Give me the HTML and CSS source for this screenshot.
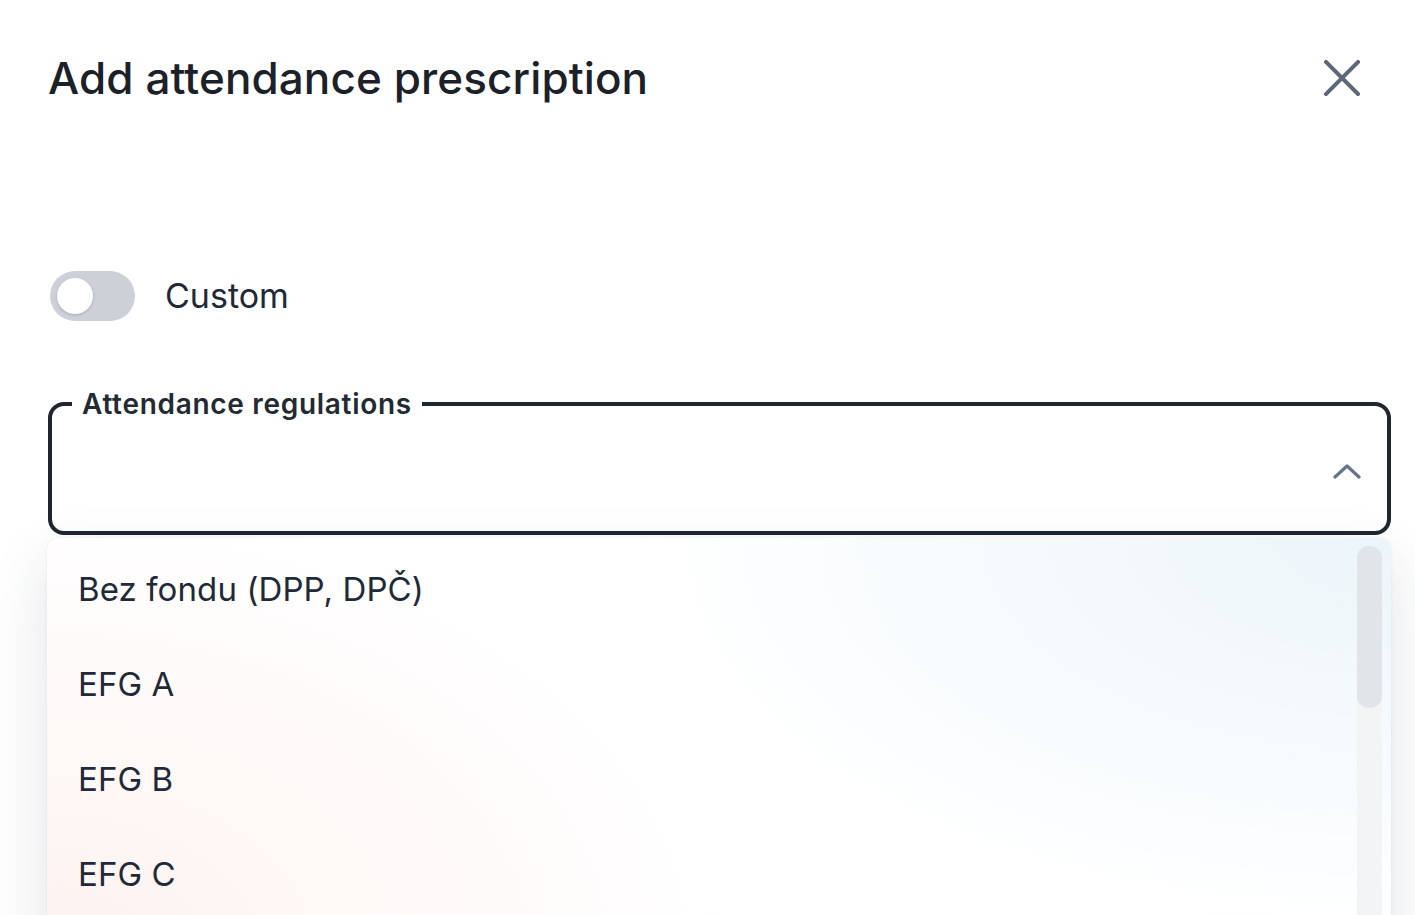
FILE: index.html
```html
<!DOCTYPE html>
<html lang="en">
<head>
<meta charset="utf-8">
<title>Add attendance prescription</title>
<link rel="stylesheet" href="styles.css">
</head>
<body>
<div class="dialog">
  <header class="head">
    <h1 class="title">Add attendance prescription</h1>
    <button class="close" aria-label="Close">
      <svg width="36" height="36" viewBox="0 0 36 36"><path d="M2 2 L34 34 M34 2 L2 34" stroke="#5d6978" stroke-width="4" stroke-linecap="square" fill="none"/></svg>
    </button>
  </header>

  <div class="toggle-row">
    <span class="switch"><span class="knob"></span></span>
    <span class="toggle-label">Custom</span>
  </div>

  <fieldset class="field">
    <legend class="field-label">Attendance regulations</legend>
    <div class="field-body">
      <svg class="chevron" width="28" height="16" viewBox="0 0 28 16"><path d="M2 14 L14 3 L26 14" stroke="#64748b" stroke-width="3.2" stroke-linecap="round" stroke-linejoin="round" fill="none"/></svg>
    </div>
  </fieldset>

  <div class="menu">
    <ul class="options">
      <li class="option">Bez fondu (DPP, DPČ)</li>
      <li class="option">EFG A</li>
      <li class="option">EFG B</li>
      <li class="option">EFG C</li>
    </ul>
    <div class="scrollbar"><div class="thumb"></div></div>
  </div>
</div>
</body>
</html>
```

FILE: styles.css
```css
* { box-sizing: border-box; }
html, body { margin: 0; padding: 0; background: #ffffff; overflow: hidden; }
body { height: 915px; }

.dialog {
  padding: 52px 24px 0 48px;
  font-family: Inter, "Liberation Sans", sans-serif;
  color: #1e232b;
}

.head {
  display: flex;
  align-items: center;
  justify-content: space-between;
}
.title {
  margin: 0;
  font-size: 44px;
  line-height: 1.2;
  font-weight: 500;
  letter-spacing: 0.1px;
  color: #1c2129;
}
.close {
  border: 0;
  background: none;
  padding: 0;
  margin-right: 31px;
  width: 36px;
  height: 36px;
  display: flex;
  align-items: center;
  justify-content: center;
}

.toggle-row {
  margin-top: 166px;
  display: flex;
  align-items: center;
  gap: 30px;
  margin-left: 2px;
}
.switch {
  width: 85px;
  height: 50px;
  border-radius: 25px;
  background: #cdd1d7;
  display: flex;
  align-items: center;
  padding-left: 7px;
}
.knob {
  width: 36px;
  height: 36px;
  border-radius: 50%;
  background: #ffffff;
  box-shadow: 0 1px 3px rgba(0,0,0,0.18);
}
.toggle-label {
  font-family: Inter, "Liberation Sans", sans-serif;
  font-size: 34px;
  color: #1f2937;
}

.field {
  margin: 69px 0 0 0;
  padding: 0 26px 0 24px;
  border: 4px solid #1f2630;
  border-radius: 16px;
  min-width: 0;
}
.field-label {
  padding: 0 10px;
  margin-left: -4px;
  font-size: 28px;
  line-height: 28px;
  font-weight: 600;
  letter-spacing: 0.7px;
  color: #232a33;
}
.field-body {
  height: 113px;
  display: flex;
  align-items: center;
  justify-content: flex-end;
  padding-bottom: 7px;
}

.menu {
  position: relative;
  margin: 3px 0 0 -1px;
  height: 420px;
  border-radius: 12px 12px 0 0;
  background:
    radial-gradient(ellipse 1000px 520px at 100% 0%, rgba(232,243,249,0.85), rgba(232,243,249,0) 75%),
    radial-gradient(ellipse 900px 600px at 0% 100%, rgba(252,238,234,0.75), rgba(252,238,234,0) 75%),
    #ffffff;
  box-shadow: 0 24px 60px rgba(30,41,59,0.13), 0 0 4px rgba(30,41,59,0.05);
  overflow: hidden;
}
.options {
  list-style: none;
  margin: 0;
  padding: 4px 0 0 31px;
}
.option {
  height: 95px;
  display: flex;
  align-items: center;
  font-family: Inter, "Liberation Sans", sans-serif;
  font-size: 33px;
  letter-spacing: 0.1px;
  color: #1f2937;
}
.scrollbar {
  position: absolute;
  top: 8px;
  right: 9px;
  bottom: 0;
  width: 25px;
  background: #f3f4f6;
  border-radius: 12px 12px 0 0;
}
.thumb {
  height: 162px;
  border-radius: 12px;
  background: #e1e4e8;
}
```
